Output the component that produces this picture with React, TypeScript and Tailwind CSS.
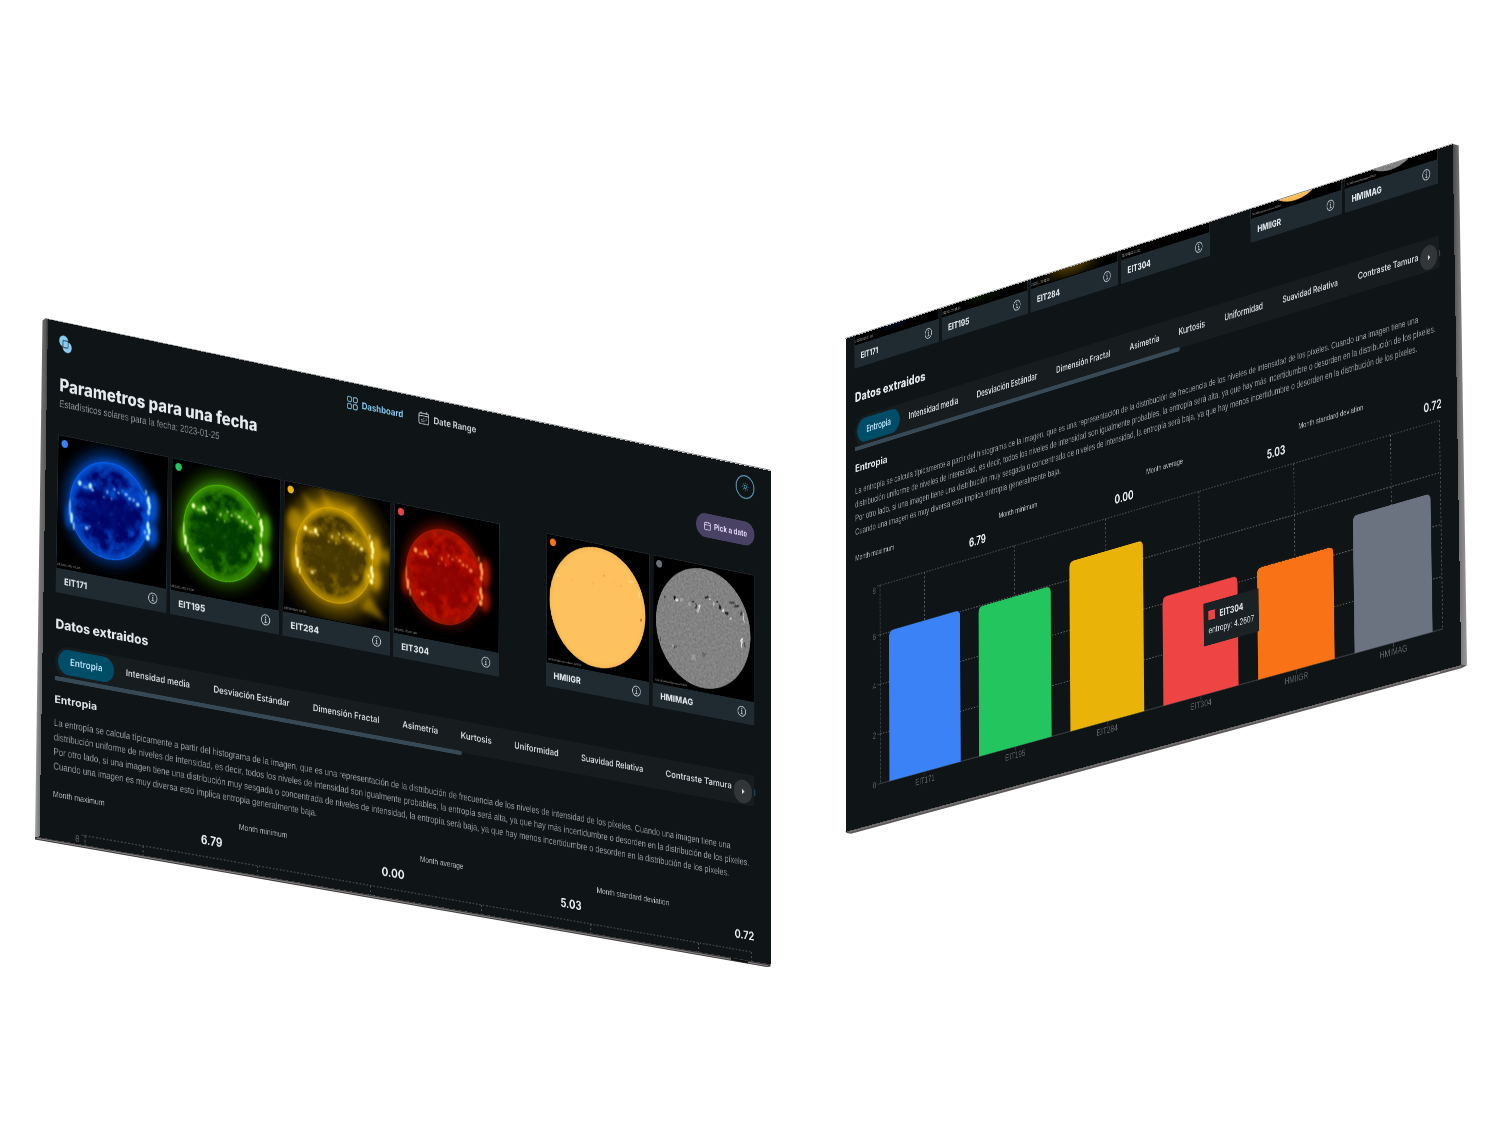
import React, { useLayoutEffect, useRef, useState } from 'react';
import { Calendar } from 'lucide-react';
import { HiOutlineCalendarDays, HiOutlineSquares2X2 } from 'react-icons/hi2';
import { IoInformationCircleOutline } from 'react-icons/io5';

type Point = [number, number];

const W = 1280;
const H = 720;

/* Projective transform that maps the W x H screen onto four corners (TL, TR, BR, BL). */
function project([p0, p1, p2, p3]: Point[]): string {
  const dx1 = p1[0] - p2[0];
  const dy1 = p1[1] - p2[1];
  const dx2 = p3[0] - p2[0];
  const dy2 = p3[1] - p2[1];
  const sx = p0[0] - p1[0] + p2[0] - p3[0];
  const sy = p0[1] - p1[1] + p2[1] - p3[1];
  const den = dx1 * dy2 - dx2 * dy1;
  const g = (sx * dy2 - dx2 * sy) / den;
  const h = (dx1 * sy - sx * dy1) / den;
  const a = p1[0] - p0[0] + g * p1[0];
  const b = p3[0] - p0[0] + h * p3[0];
  const d = p1[1] - p0[1] + g * p1[1];
  const e = p3[1] - p0[1] + h * p3[1];
  return `matrix3d(${[a / W, d / W, 0, g / W, b / H, e / H, 0, h / H, 0, 0, 1, 0, p0[0], p0[1], 0, 1].join(',')})`;
}

/* Single line of text set to an exact width. */
function Fit({ w, className = '', children }: { w: number; className?: string; children: string }) {
  const ref = useRef<HTMLSpanElement>(null);
  const [scale, setScale] = useState(1);
  useLayoutEffect(() => {
    if (ref.current) setScale(w / ref.current.offsetWidth);
  }, [w]);
  return (
    <span className={`block whitespace-nowrap ${className}`} style={{ width: w }}>
      <span ref={ref} className="inline-block origin-left" style={{ transform: `scaleX(${scale})` }}>
        {children}
      </span>
    </span>
  );
}

const display = "font-['Inter',sans-serif]";

/* Bright active regions: x, y, rx, ry, opacity. */
const spots: [number, number, number, number, number][] = [
  [37, 61, 3, 3.5, 1], [55, 62, 3, 4, 1], [59, 67, 2, 2, 0.8], [47, 65, 5, 2, 0.4], [84, 66, 1.6, 2.4, 0.8], [78, 74, 1.6, 1.4, 0.6],
  [91, 74, 1.4, 2, 0.5], [96, 60, 1.6, 2, 0.7], [103, 64, 2, 1.6, 0.8], [110, 60, 1.4, 1.4, 0.5], [116, 64, 3, 2, 0.7],
  [122, 69, 2.4, 2, 0.8], [129, 70, 2, 2.4, 0.6], [136, 75, 3, 2.6, 0.8], [150, 56, 1.6, 4, 0.7], [154, 66, 2.6, 6, 1],
  [156, 74, 2.4, 6, 1], [155, 83, 2.6, 4, 0.8], [154, 102, 2.6, 6, 1], [156, 110, 2.4, 5, 1], [154, 119, 3.2, 4, 1],
  [149, 112, 2, 3, 0.6], [24, 112, 2.4, 8, 1], [21, 98, 1.4, 12, 0.7], [28, 123, 1.6, 6, 0.7], [50, 122, 3, 2.6, 0.7],
  [55, 119, 1.6, 1.6, 0.5], [70, 112, 1, 1, 0.4], [92, 96, 1, 1, 0.3], [104, 108, 1, 1, 0.3],
];

type SunKind = { id: string; deep: string; mid: string; hot: string; glow: number; glowA: number; ring: number; noise: string };

function EuvSun({ s }: { s: SunKind }) {
  return (
    <svg viewBox="0 0 186 185" className="block h-full w-full bg-black" colorInterpolationFilters="sRGB">
      <defs>
        <radialGradient id={`g-${s.id}`} gradientUnits="userSpaceOnUse" cx="89" cy="88" r={s.glow}>
          <stop offset={64 / s.glow} stopColor={s.mid} stopOpacity={s.glowA} />
          <stop offset={(64 + (s.glow - 64) * 0.35) / s.glow} stopColor={s.mid} stopOpacity={s.glowA * 0.45} />
          <stop offset={(64 + (s.glow - 64) * 0.7) / s.glow} stopColor={s.mid} stopOpacity={s.glowA * 0.13} />
          <stop offset="1" stopColor={s.mid} stopOpacity="0" />
        </radialGradient>
        <radialGradient id={`d-${s.id}`}>
          <stop offset="0" stopColor={s.deep} />
          <stop offset="0.8" stopColor={s.deep} />
          <stop offset="1" stopColor={s.mid} stopOpacity="0.5" />
        </radialGradient>
        <clipPath id={`c-${s.id}`}>
          <circle cx="88" cy="92" r="68" />
        </clipPath>
        <filter id={`n-${s.id}`} x="0" y="0" width="100%" height="100%">
          <feTurbulence type="fractalNoise" baseFrequency="0.06" numOctaves="4" seed="7" />
          <feColorMatrix values={s.noise} />
          <feGaussianBlur stdDeviation="0.6" />
        </filter>
        <filter id={`w-${s.id}`} x="-20%" y="-20%" width="140%" height="140%">
          <feGaussianBlur stdDeviation="1.1" />
        </filter>
        <filter id={`b-${s.id}`} x="-100%" y="-100%" width="300%" height="300%">
          <feGaussianBlur stdDeviation="4.5" />
        </filter>
      </defs>
      <rect width="186" height="185" fill={`url(#g-${s.id})`} />
      <g filter={`url(#b-${s.id})`} fill={s.mid} opacity="0.75">
        <ellipse cx="162" cy="75" rx="9" ry="22" />
        <ellipse cx="162" cy="115" rx="9" ry="16" />
        <ellipse cx="20" cy="110" rx="6" ry="18" />
        {s.glow > 110 && (
          <g opacity="0.75">
            <ellipse cx="17" cy="52" rx="12" ry="16" />
            <path d="M30 10L60 32L50 45Z" />
            <path d="M62 0L88 25L74 28Z" />
            <path d="M100 26L128 14L118 34Z" />
            <path d="M135 160L180 172L150 140Z" />
            <path d="M160 78L186 66L186 90Z" />
          </g>
        )}
      </g>
      <circle cx="88" cy="92" r="68" fill={`url(#d-${s.id})`} />
      <g clipPath={`url(#c-${s.id})`}>
        <rect width="186" height="185" filter={`url(#n-${s.id})`} />
        <ellipse cx="86" cy="100" rx="42" ry="20" fill={s.deep} opacity="0.75" filter={`url(#b-${s.id})`} />
        <g filter={`url(#b-${s.id})`} fill={s.mid} opacity="0.85">
          <ellipse cx="46" cy="63" rx="14" ry="6" />
          <ellipse cx="88" cy="66" rx="12" ry="5" opacity="0.6" />
          <ellipse cx="124" cy="66" rx="24" ry="6" transform="rotate(18 124 66)" />
          <ellipse cx="148" cy="112" rx="7" ry="12" />
          <ellipse cx="50" cy="121" rx="6" ry="5" opacity="0.7" />
          <ellipse cx="128" cy="136" rx="14" ry="6" opacity="0.5" />
        </g>
      </g>
      <circle cx="88" cy="92" r="67.5" fill="none" stroke={s.mid} strokeWidth="1.6" opacity={s.ring} />
      <g filter={`url(#w-${s.id})`} fill={s.hot}>
        {spots.map(([x, y, rx, ry, o], i) => (
          <ellipse key={i} cx={x} cy={y} rx={rx} ry={ry} opacity={o} />
        ))}
      </g>
      <text x="1" y="182" fontSize="4.6" fill="#b5b5b5" fontFamily="Liberation Sans" textLength="39">2023/01/25 01:00</text>
    </svg>
  );
}

function Continuum() {
  return (
    <svg viewBox="0 0 186 185" className="block h-full w-full bg-black">
      <defs>
        <radialGradient id="hmi-o">
          <stop offset="0" stopColor="#fdc25f" />
          <stop offset="0.9" stopColor="#fdc25e" />
          <stop offset="1" stopColor="#f6b955" />
        </radialGradient>
      </defs>
      <circle cx="92.5" cy="92" r="87.5" fill="url(#hmi-o)" />
      <g fill="#e89a48">
        <circle cx="46" cy="60" r="0.9" />
        <circle cx="83" cy="59" r="0.9" />
        <circle cx="104" cy="44" r="1.3" />
        <circle cx="123" cy="50" r="0.8" />
        <circle cx="135" cy="54" r="0.9" />
        <ellipse cx="172" cy="98" rx="1.4" ry="2.6" fill="#c9701c" />
      </g>
      <g fill="#ffd993" opacity="0.7">
        <ellipse cx="20" cy="57" rx="3" ry="2" />
        <ellipse cx="153" cy="45" rx="6" ry="1.5" />
        <ellipse cx="168" cy="62" rx="1.5" ry="5" />
      </g>
      <text x="3" y="182" fontSize="4" fill="#8f8f8f" fontFamily="Liberation Sans" textLength="60">SDO/HMI Quick-Look Continuum: 20230125</text>
    </svg>
  );
}

/* Magnetic regions: x, y, rx, ry, shade. */
const flux: [number, number, number, number, string][] = [
  [38, 55, 2.2, 2.6, '#0a0a0a'], [43, 58, 2.6, 2.2, '#f0f0f0'], [20, 57, 1.2, 1.8, '#333'], [72, 56, 1.8, 1.8, '#2a2a2a'], [79, 61, 1.6, 4, '#3b3b3b'],
  [86, 62, 2, 4.4, '#dadada'], [82, 68, 2, 3, '#bfbfbf'], [98, 45, 2, 1.8, '#262626'], [104, 47, 1.8, 1.5, '#d0d0d0'], [118, 50, 1.8, 2.2, '#222'],
  [123, 56, 2.6, 3, '#1d1d1d'], [130, 61, 2.2, 2.2, '#e8e8e8'], [137, 64, 2.6, 1.8, '#202020'], [142, 69, 2, 1.8, '#e0e0e0'], [146, 46, 5, 1.5, '#444'],
  [154, 50, 5, 1.4, '#333'], [162, 58, 1.6, 4, '#3b3b3b'], [168, 65, 1.3, 7, '#d0d0d0'], [164, 103, 1.5, 7, '#e5e5e5'], [169, 104, 1.2, 5, '#444'],
  [40, 128, 1.8, 2.2, '#444'], [36, 125, 1.8, 1.4, '#b0b0b0'], [75, 137, 4, 4, '#9a9a9a'], [94, 131, 3, 3, '#666'], [52, 57, 4, 2, '#a5a5a5'],
  [13, 120, 1, 4, '#444'], [66, 60, 3, 2, '#a0a0a0'], [112, 53, 2, 2, '#bbb'],
];

function Magnetogram() {
  return (
    <svg viewBox="0 0 186 185" className="block h-full w-full bg-black" colorInterpolationFilters="sRGB">
      <defs>
        <clipPath id="hmi-c">
          <circle cx="92.5" cy="92" r="87.5" />
        </clipPath>
        <filter id="hmi-n" x="0" y="0" width="100%" height="100%">
          <feTurbulence type="fractalNoise" baseFrequency="0.3" numOctaves="2" seed="5" />
          <feColorMatrix values="0.2 0 0 0 0.41  0.2 0 0 0 0.41  0.2 0 0 0 0.41  0 0 0 0 1" />
        </filter>
        <filter id="hmi-w" x="-10%" y="-10%" width="120%" height="120%">
          <feTurbulence type="fractalNoise" baseFrequency="0.15" numOctaves="2" seed="9" result="t" />
          <feDisplacementMap in="SourceGraphic" in2="t" scale="7" xChannelSelector="R" yChannelSelector="G" />
          <feGaussianBlur stdDeviation="0.7" />
        </filter>
      </defs>
      <g clipPath="url(#hmi-c)">
        <rect width="186" height="185" fill="#828282" />
        <rect width="186" height="185" filter="url(#hmi-n)" />
        <g filter="url(#hmi-w)">
          {flux.map(([x, y, rx, ry, c], i) => (
            <ellipse key={i} cx={x} cy={y} rx={rx} ry={ry} fill={c} />
          ))}
        </g>
      </g>
      <text x="3" y="182" fontSize="4" fill="#8f8f8f" fontFamily="Liberation Sans" textLength="60">SDO/HMI Quick-Look Magnetogram: 20230125</text>
    </svg>
  );
}

const suns: Record<string, SunKind> = {
  EIT171: { id: '171', deep: '#000768', mid: '#0560f0', hot: '#bdeeff', glow: 96, glowA: 0.7, ring: 0.9, noise: '0 0 0 0 0.02  0 0 0 0 0.36  0 0 0 0 0.9  1.8 0 0 0 -0.75' },
  EIT195: { id: '195', deep: '#023c00', mid: '#48b200', hot: '#f0ffb8', glow: 98, glowA: 0.65, ring: 0.9, noise: '0 0 0 0 0.22  0 0 0 0 0.58  0 0 0 0 0  1.8 0 0 0 -0.75' },
  EIT284: { id: '284', deep: '#463700', mid: '#d8a800', hot: '#fff6a8', glow: 114, glowA: 0.85, ring: 0.7, noise: '0 0 0 0 0.6  0 0 0 0 0.48  0 0 0 0 0  1.8 0 0 0 -0.8' },
  EIT304: { id: '304', deep: '#8c0400', mid: '#c81a00', hot: '#ff9a4a', glow: 88, glowA: 0.5, ring: 0.5, noise: '0 0 0 0 0.85  0 0 0 0 0.1  0 0 0 0 0  1.8 0 0 0 -0.75' },
};

function Card({ name, dot, w, prefix }: { name: string; dot: string; w: number; prefix: string }) {
  const sun = suns[name];
  return (
    <div className="relative flex h-[219.5px] w-[186.5px] flex-col border border-[#1f2a31] bg-[#1f2a31]">
      <div className="h-[184.5px] overflow-hidden">
        {sun ? <EuvSun s={{ ...sun, id: prefix + sun.id }} /> : name === 'HMIIGR' ? <Continuum /> : <Magnetogram />}
      </div>
      <div className="flex flex-1 items-start justify-between pl-[12.5px] pr-[11.5px]">
        <Fit w={w} className={`${display} pt-[7px] text-[13px] font-extrabold leading-[20px] text-[#dfe5ea]`}>{name}</Fit>
        <IoInformationCircleOutline className="mt-[7px] size-[20px] text-[#c3cad0]" />
      </div>
      <span className={`absolute left-[4.5px] top-[4.5px] size-[11px] rounded-full ${dot}`} />
    </div>
  );
}

const tabs: [string, number][] = [
  ['Entropia', 54.5], ['Intensidad media', 109], ['Desviación Estándar', 131], ['Dimensión Fractal', 116], ['Asimetría', 63],
  ['Kurtosis', 55], ['Uniformidad', 80], ['Suavidad Relativa', 113], ['Contraste Tamura', 121],
];

const lines: [string, number][] = [
  ['La entropía se calcula típicamente a partir del histograma de la imagen, que es una representación de la distribución de frecuencia de los niveles de intensidad de los píxeles. Cuando una imagen tiene una', 1185],
  ['distribución uniforme de niveles de intensidad, es decir, todos los niveles de intensidad son igualmente probables, la entropía será alta, ya que hay más incertidumbre o desorden en la distribución de los píxeles.', 1220],
  ['Por otro lado, si una imagen tiene una distribución muy sesgada o concentrada de niveles de intensidad, la entropía será baja, ya que hay menos incertidumbre o desorden en la distribución de los píxeles.', 1183],
  ['Cuando una imagen es muy diversa esto implica entropia generalmente baja.', 448],
];

const stats: [string, number, string, number][] = [
  ['Month maximum', 86.5, '6.79', 37], ['Month minimum', 83.5, '0.00', 40], ['Month average', 77, '5.03', 38], ['Month standard deviation', 131, '0.72', 36],
];

const bars = [
  { name: 'EIT171', v: 6.06, color: '#3b82f6', w: 42 },
  { name: 'EIT195', v: 5.97, color: '#22c55e', w: 43 },
  { name: 'EIT284', v: 6.72, color: '#eab308', w: 44 },
  { name: 'EIT304', v: 4.2607, color: '#ef4444', w: 44 },
  { name: 'HMIIGR', v: 4.33, color: '#f97316', w: 48 },
  { name: 'HMIMAG', v: 5.3, color: '#6b7280', w: 55 },
];

function Chart({ full }: { full: boolean }) {
  const left = 54.8;
  const right = 1224;
  const top = 7;
  const bottom = 294.2;
  const band = (right - left) / 6;
  const unit = (bottom - top) / 8;
  const ticks = full ? [0, 2, 4, 6, 8] : [8];
  return (
    <svg width="1230" height="330" className="block shrink-0" fontFamily="Liberation Sans" fontSize="13.5">
      <g stroke="#6a6e71" strokeWidth="1.2" strokeDasharray="3 3">
        {[2, 4, 6, 8].map((t) => (
          <line key={t} x1={left} x2={right} y1={bottom - t * unit} y2={bottom - t * unit} />
        ))}
        {bars.map((b, i) => (
          <line key={b.name} x1={left + band * (i + 0.5)} x2={left + band * (i + 0.5)} y1={top} y2={bottom} />
        ))}
        <line x1={left} x2={left} y1={top} y2={bottom} />
        <line x1={right} x2={right} y1={top} y2={bottom} />
      </g>
      <g stroke="#45494c" strokeWidth="1.2">
        <line x1={left} x2={right} y1={bottom} y2={bottom} />
        <line x1={left} x2={left} y1={top} y2={bottom} opacity="0.5" />
        {[0, 2, 4, 6, 8].map((t) => (
          <line key={t} x1={left - 6} x2={left} y1={bottom - t * unit} y2={bottom - t * unit} />
        ))}
        {bars.map((b, i) => (
          <line key={b.name} x1={left + band * (i + 0.5)} x2={left + band * (i + 0.5)} y1={bottom} y2={bottom + 6} />
        ))}
      </g>
      <g fill="#5f6366">
        {ticks.map((t) => (
          <text key={t} x={left - 9} y={bottom - t * unit + (t === 8 ? 10 : 5)} textAnchor="end">{t}</text>
        ))}
        {full && bars.map((b, i) => (
          <text key={b.name} x={left + band * (i + 0.5) - b.w / 2} y={bottom + 16.5} textLength={b.w} lengthAdjust="spacingAndGlyphs">{b.name}</text>
        ))}
      </g>
      {bars.map((b, i) => {
        const x = left + band * i + 20;
        const y = bottom - b.v * unit;
        return <path key={b.name} fill={b.color} d={`M${x} ${bottom}V${y + 9}Q${x} ${y} ${x + 9} ${y}H${x + 146}Q${x + 155} ${y} ${x + 155} ${y + 9}V${bottom}Z`} />;
      })}
    </svg>
  );
}

function Dashboard({ prefix, full = false }: { prefix: string; full?: boolean }) {
  return (
    <div className="flex h-[1060px] w-[1280px] shrink-0 flex-col pl-[20.500px] pr-[30px] font-['Liberation_Sans',Arial,sans-serif] text-[#e2e7eb]">
      <header className="flex h-[49px] items-end">
        <svg viewBox="0 0 22 24" className="-ml-[1.500px] mb-[7px] h-[24px] w-[22px]">
          <g fill="#8bcdf0">
            <circle cx="8" cy="8" r="7.700" />
            <circle cx="14" cy="16" r="7.700" />
          </g>
          <rect x="6.800" y="7.200" width="8.600" height="9.600" rx="1" fill="#8bcdf0" stroke="#1b3340" strokeWidth="1.200" />
        </svg>
        <nav className={`${display} mb-[8px] ml-[470px] flex items-center text-[13.500px] font-bold leading-[22px]`}>
          <HiOutlineSquares2X2 className="size-[25px] text-[#78bde0]" />
          <Fit w={73} className="ml-[4px] text-[#82c9ee]">Dashboard</Fit>
          <HiOutlineCalendarDays className="ml-[25px] size-[23px] text-[#bfc5ca]" />
          <Fit w={75.5} className="ml-[5.500px] text-[#c6ccd1]">Date Range</Fit>
        </nav>
        <div className="mb-[.5px] ml-auto flex size-[35px] items-center justify-center rounded-full border-2 border-[#5290ab]">
          <svg viewBox="0 0 24 24" className="size-[14px]" fill="none" stroke="#5a9ab5" strokeWidth="2" strokeLinecap="round">
            <circle cx="12" cy="12" r="4" />
            <path d="M12 2v2M12 20v2M4.900 4.900l1.400 1.400M17.700 17.700l1.400 1.400M2 12h2M20 12h2M6.300 17.700l-1.400 1.400M19.100 4.900l-1.400 1.400" />
          </svg>
        </div>
      </header>

      <div className="mt-[25px] flex h-[50px] justify-between">
        <div>
          <Fit w={337.5} className={`${display} text-[25px] font-extrabold leading-[28px] text-[#e6ebf0]`}>Parametros para una fecha</Fit>
          <Fit w={273} className="mt-[2px] text-[14px] leading-[20px] text-[#90969a]">Estadísticos solares para la fecha: 2023-01-25</Fit>
        </div>
        <button className={`${display} mt-[8px] flex h-[35px] w-[108px] items-center rounded-full bg-[#4a4264] pl-[14px] text-[12.500px] font-bold leading-[20px] text-[#e6dcff]`}>
          <Calendar className="mr-[5px] size-[14px]" strokeWidth={1.8} />
          <Fit w={61}>Pick a date</Fit>
        </button>
      </div>

      <div className="-ml-[.5px] mr-[.5px] mt-[34px] flex justify-between">
        <div className="flex gap-[6.500px]">
          <Card prefix={prefix} name="EIT171" dot="bg-[#3b82f6]" w={39} />
          <Card prefix={prefix} name="EIT195" dot="bg-[#22c55e]" w={46} />
          <Card prefix={prefix} name="EIT284" dot="bg-[#eab308]" w={49} />
          <Card prefix={prefix} name="EIT304" dot="bg-[#ef4444]" w={49} />
        </div>
        <div className="flex gap-[6.500px]">
          <Card prefix={prefix} name="HMIIGR" dot="bg-[#f97316]" w={49} />
          <Card prefix={prefix} name="HMIMAG" dot="bg-[#6b7280]" w={60} />
        </div>
      </div>

      <Fit w={156.5} className={`${display} mt-[29px] text-[18.500px] font-extrabold leading-[28px]`}>Datos extraidos</Fit>

      <div className="relative mt-[16.500px] flex h-[45px] shrink-0 items-center rounded-l-full bg-[#171c1f] pl-[5px]">
        {tabs.map(([name, w], i) => (
          <div key={name} className={`-mt-[3px] flex h-[35px] items-center rounded-full px-[20px] ${display} text-[13px] font-semibold ${i === 0 ? 'bg-[#004d67] text-[#c0e8ff]' : 'text-[#d3d8dc]'}`}>
            <Fit w={w}>{name}</Fit>
          </div>
        ))}
        <div className="absolute right-[4px] top-[9px] flex size-[34px] items-center justify-center rounded-full bg-[#323638]">
          <span className="border-y-[4px] border-l-[5px] border-y-transparent border-l-[#d9dde0]" />
        </div>
        <span className="absolute -right-[1.500px] top-[20px] h-[9px] w-[2px] bg-[#1d4a61]" />
      </div>
      <div className="relative -mt-[2px] h-[6px] w-[700px] shrink-0 rounded-r-sm bg-[#374955]" />

      <Fit w={71.5} className={`${display} mt-[16px] text-[14.500px] font-bold leading-[20px]`}>Entropia</Fit>
      <p className="mt-[12.500px] text-[13.500px] leading-[20px] text-[#979da1]">
        {lines.map(([t, w]) => (
          <Fit key={w} w={w}>{t}</Fit>
        ))}
      </p>

      <div className="mt-[20px] grid grid-cols-4 gap-x-[27px]">
        {stats.map(([label, lw, value, vw]) => (
          <div key={label} className="flex flex-col">
            <Fit w={lw} className="text-[11.500px] leading-[17px] text-[#bcc1c5]">{label}</Fit>
            <Fit w={vw} className={`${display} ml-auto mt-[6px] text-[17px] font-bold leading-[24px] text-[#e8edf1]`}>{value}</Fit>
          </div>
        ))}
      </div>
      <div className="mt-[4px]">
        <Chart full={full} />
      </div>
    </div>
  );
}

function Tooltip() {
  return (
    <div className="absolute left-[765px] top-[536.500px] h-[60px] w-[113px] bg-[#1b2226] pl-[10px] pt-[9px] font-['Liberation_Sans',Arial,sans-serif] text-[#d9dee2]">
      <div className="flex h-[20px] items-center">
        <span className="mr-[10px] size-[13px] bg-[#ef4444]" />
        <Fit w={49} className={`${display} text-[13px] font-extrabold leading-[20px]`}>EIT304</Fit>
      </div>
      <Fit w={94} className="mt-[1px] text-[13.500px] leading-[20px]">entropy: 4.2607</Fit>
    </div>
  );
}

function Screen({ corners, children }: { corners: Point[]; children: React.ReactNode }) {
  return (
    <div className="absolute left-0 top-0 h-[720px] w-[1280px] origin-top-left overflow-hidden bg-[#0f1416]" style={{ transform: project(corners) }}>
      {children}
    </div>
  );
}

/* Metal sides of the two monitors. */
function Bezels() {
  return (
    <svg viewBox="0 0 1500 1125" className="absolute inset-0 h-full w-full">
      <defs>
        <linearGradient id="side-l" x1="0" x2="1" y1="0" y2="0">
          <stop offset="0" stopColor="#a5a5a5" />
          <stop offset="0.35" stopColor="#757575" />
          <stop offset="0.75" stopColor="#5c5c5c" />
          <stop offset="1" stopColor="#222" />
        </linearGradient>
        <linearGradient id="side-r" x1="0" x2="1" y1="0" y2="0">
          <stop offset="0" stopColor="#444" />
          <stop offset="0.5" stopColor="#747474" />
          <stop offset="1" stopColor="#9a9a9a" />
        </linearGradient>
      </defs>
      <path d="M42.500 320.500L45 318.800L49 319L40.500 838L35 838.500Z" fill="url(#side-l)" />
      <path d="M35 837L40 837L770.500 964L770.500 966.500L767 967L35 839.500Z" fill="#3c3a3a" />
      <path d="M37 838.300L768 965.800" stroke="#a9a6a5" strokeWidth="0.7" />
      <path d="M45 318.600L770.500 470.300" stroke="#6a6a6a" strokeWidth="0.9" />
      <path d="M731 959L748 962.300" stroke="#0b0d0e" strokeWidth="2" />
      <path d="M1452 143.800L1458.700 145.500L1467 665L1461 668Z" fill="url(#side-r)" />
      <path d="M845.500 831L1461 664.500L1467 665.500L1461 668.300L851 833.800L846.500 833Z" fill="#5b5858" />
      <path d="M849 832L1461 666" stroke="#8e8b8a" strokeWidth="0.6" />
      <path d="M845 338.600L1453 143.800" stroke="#777" strokeWidth="0.9" />
      <path d="M1427 675.500L1440 672" stroke="#b5b2b0" strokeWidth="1" />
    </svg>
  );
}

export default function App() {
  return (
    <main className="relative h-[1125px] w-[1500px] overflow-hidden bg-white">
      <Bezels />
      <Screen corners={[[48, 319.3], [770.5, 471], [770.5, 964.3], [39.5, 837.3]]}>
        <Dashboard prefix="a" />
      </Screen>
      <Screen corners={[[845.5, 339], [1452.7, 144.3], [1461.3, 665], [846, 831.7]]}>
        <div className="-mt-[329.600px]">
          <Dashboard prefix="b" full />
        </div>
        <Tooltip />
      </Screen>
    </main>
  );
}
